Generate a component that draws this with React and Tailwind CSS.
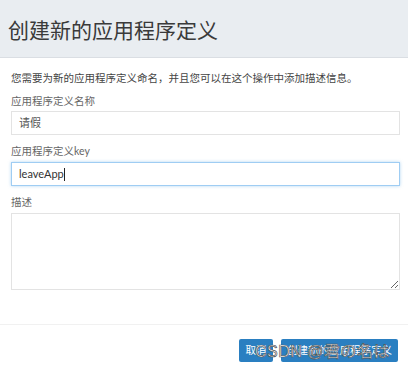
export default function App() {
  const cjk = { fontFamily: 'Lato, "Noto Sans CJK SC", sans-serif' };
  return (
    <div className="relative w-[408px] h-[373px] bg-white overflow-hidden" style={cjk}>
      <div className="h-[58px] bg-[#e9edf1] border-b border-[#dadee3] flex items-center px-[8px]">
        <h1 className="text-[21px] leading-[26px] text-[#3a3a3a] font-normal pt-[2px]">创建新的应用程序定义</h1>
      </div>
      <div className="px-[11px] pr-[8px]">
        <p className="mt-[13px] text-[10.5px] leading-[14px] text-[#444]">您需要为新的应用程序定义命名，并且您可以在这个操作中添加描述信息。</p>
        <div className="mt-[9px] text-[10.5px] leading-[14px] text-[#666]">应用程序定义名称</div>
        <div className="mt-[3px] h-[24px] border border-[#e3e3e3] flex items-center px-[7px] text-[11px] text-[#555]">请假</div>
        <div className="mt-[9px] text-[10.5px] leading-[14px] text-[#666]">应用程序定义key</div>
        <div className="mt-[4px] h-[24px] border border-[#9fcdf3] shadow-[0_0_3px_rgba(102,175,233,0.5)] flex items-center px-[7px] text-[11px] text-[#333]">
          leaveApp<span className="inline-block w-px h-[13px] bg-[#222]"></span>
        </div>
        <div className="mt-[9px] text-[10.5px] leading-[14px] text-[#666]">描述</div>
        <textarea className="mt-[4px] block w-full h-[77px] border border-[#e3e3e3] resize-y outline-none"></textarea>
      </div>
      <div className="mt-[34px] border-t border-[#f1f1f1] flex justify-end gap-[8px] pt-[14px] pr-[10px]">
        <button className="h-[23px] w-[34px] bg-[#2a7fc1] rounded-[2px] text-white text-[10.5px]">取消</button>
        <button className="h-[23px] w-[117px] bg-[#2a7fc1] rounded-[2px] text-white text-[10.5px]">创建新的应用程序定义</button>
      </div>
      <div className="absolute left-[255px] top-[342px] text-[16px] leading-[20px] text-white [-webkit-text-stroke:0.7px_#555] tracking-[0.5px]" style={{ fontFamily: '"Liberation Sans", "Noto Sans CJK JP", sans-serif' }}>
        CSDN @君の名は
      </div>
    </div>
  );
}
